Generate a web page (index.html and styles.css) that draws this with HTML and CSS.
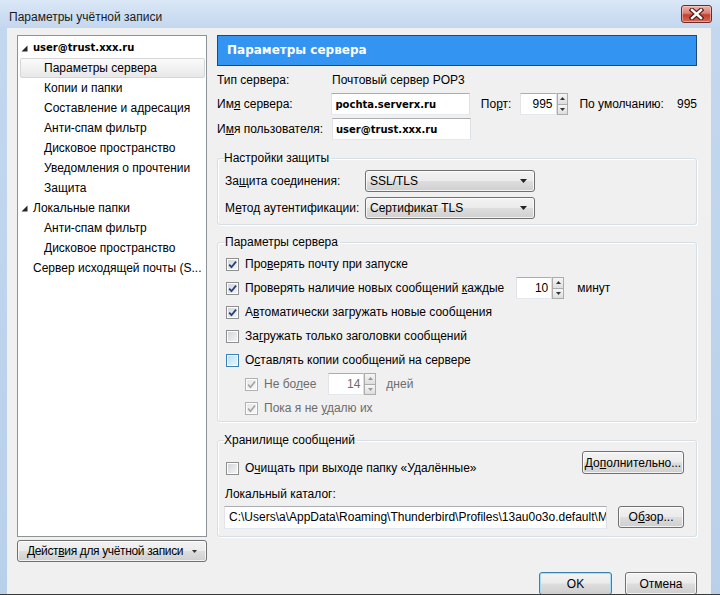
FILE: index.html
```html
<!DOCTYPE html>
<html lang="ru">
  <head>
    <meta charset="UTF-8" />
    <meta name="viewport" content="width=device-width, initial-scale=1.0" />
    <title>Параметры учётной записи</title>
    <link rel="stylesheet" href="styles.css">
  </head>
  <body>
    <div class="window">
      <div class="titlebar">
        <span class="title">Параметры учётной записи</span>
        <span class="close">
          <svg width="15" height="12" viewBox="0 0 15 12">
            <path d="M3 2 L12 10 M12 2 L3 10" stroke="#4a1612" stroke-width="4.6" stroke-linecap="square" fill="none" />
            <path d="M3 2 L12 10 M12 2 L3 10" stroke="#fff" stroke-width="2.4" stroke-linecap="square" fill="none" />
          </svg>
        </span>
      </div>

      <div class="client">
        <div class="body-row">
          <div class="sidebar">
            <ul class="tree">
              <li class="node">
                <span class="twisty"><svg width="7" height="7" viewBox="0 0 7 7"><polygon points="6.5,0.5 6.5,6.5 0.5,6.5" fill="#262626" /></svg></span>
                <span class="account">user@trust.xxx.ru</span>
              </li>
              <li class="child selected">Параметры сервера</li>
              <li class="child">Копии и папки</li>
              <li class="child">Составление и адресация</li>
              <li class="child">Анти-спам фильтр</li>
              <li class="child">Дисковое пространство</li>
              <li class="child">Уведомления о прочтении</li>
              <li class="child">Защита</li>
              <li class="node">
                <span class="twisty"><svg width="7" height="7" viewBox="0 0 7 7"><polygon points="6.5,0.5 6.5,6.5 0.5,6.5" fill="#262626" /></svg></span>
                <span>Локальные папки</span>
              </li>
              <li class="child">Анти-спам фильтр</li>
              <li class="child">Дисковое пространство</li>
              <li class="leaf">Сервер исходящей почты (S...</li>
            </ul>
            <button class="btn actions">
              <span class="actions-text">Дейст<u>в</u>ия для учётной записи</span>
              <svg width="5" height="3" viewBox="0 0 5 3"><polygon points="0,0 5,0 2.5,3" fill="#333" /></svg>
            </button>
          </div>

          <div class="main">
            <div class="banner">Параметры сервера</div>

            <div class="server-form">
              <div class="row">
                <span class="label">Тип сервера:</span>
                <span>Почтовый сервер POP3</span>
              </div>
              <div class="row">
                <span class="label">Им<u>я</u> сервера:</span>
                <span class="field host"><span class="strong">pochta.serverx.ru</span></span>
                <span class="port-label">По<u>р</u>т:</span>
                <span class="field num port">995</span>
                <span class="spin">
                  <span><svg width="5" height="3" viewBox="0 0 5 3"><polygon points="2.5,0 5,3 0,3" fill="#333" /></svg></span>
                  <span><svg width="5" height="3" viewBox="0 0 5 3"><polygon points="0,0 5,0 2.5,3" fill="#333" /></svg></span>
                </span>
                <span class="default-label">По умолчанию:</span>
                <span>995</span>
              </div>
              <div class="row">
                <span class="label">И<u>м</u>я пользователя:</span>
                <span class="field host"><span class="strong">user@trust.xxx.ru</span></span>
              </div>
            </div>

            <fieldset class="group security">
              <legend>Настройки защиты</legend>
              <div class="row">
                <span class="label">За<u>щ</u>ита соединения:</span>
                <span class="combo"><span>SSL/TLS</span><svg width="7" height="4" viewBox="0 0 7 4"><polygon points="0,0 7,0 3.5,4" fill="#222" /></svg></span>
              </div>
              <div class="row">
                <span class="label">М<u>е</u>тод аутентификации:</span>
                <span class="combo"><span>Сертификат TLS</span><svg width="7" height="4" viewBox="0 0 7 4"><polygon points="0,0 7,0 3.5,4" fill="#222" /></svg></span>
              </div>
            </fieldset>

            <fieldset class="group checks">
              <legend>Параметры сервера</legend>
              <div class="check-row">
                <span class="cb"><svg width="11" height="11" viewBox="0 0 11 11"><path d="M2.2 5.6 L4.5 8.2 L9 2.6" stroke="#28407a" stroke-width="1.8" fill="none" /></svg></span>
                <span>Про<u>в</u>ерять почту при запуске</span>
              </div>
              <div class="check-row">
                <span class="cb"><svg width="11" height="11" viewBox="0 0 11 11"><path d="M2.2 5.6 L4.5 8.2 L9 2.6" stroke="#28407a" stroke-width="1.8" fill="none" /></svg></span>
                <span>Проверять наличие новых сообщений <u>к</u>аждые</span>
                <span class="field num small gap-left">10</span>
                <span class="spin">
                  <span><svg width="5" height="3" viewBox="0 0 5 3"><polygon points="2.5,0 5,3 0,3" fill="#333" /></svg></span>
                  <span><svg width="5" height="3" viewBox="0 0 5 3"><polygon points="0,0 5,0 2.5,3" fill="#333" /></svg></span>
                </span>
                <span class="unit">минут</span>
              </div>
              <div class="check-row">
                <span class="cb"><svg width="11" height="11" viewBox="0 0 11 11"><path d="M2.2 5.6 L4.5 8.2 L9 2.6" stroke="#28407a" stroke-width="1.8" fill="none" /></svg></span>
                <span>А<u>в</u>томатически загружать новые сообщения</span>
              </div>
              <div class="check-row">
                <span class="cb"></span>
                <span>За<u>г</u>ружать только заголовки сообщений</span>
              </div>
              <div class="check-row">
                <span class="cb hover"></span>
                <span>О<u>с</u>тавлять копии сообщений на сервере</span>
              </div>
              <div class="check-row indent disabled">
                <span class="cb"><svg width="11" height="11" viewBox="0 0 11 11"><path d="M2.2 5.6 L4.5 8.2 L9 2.6" stroke="#a2a2a2" stroke-width="1.6" fill="none" /></svg></span>
                <span>Не бо<u>л</u>ее</span>
                <span class="field num small gap-left">14</span>
                <span class="spin">
                  <span><svg width="5" height="3" viewBox="0 0 5 3"><polygon points="2.5,0 5,3 0,3" fill="#999" /></svg></span>
                  <span><svg width="5" height="3" viewBox="0 0 5 3"><polygon points="0,0 5,0 2.5,3" fill="#999" /></svg></span>
                </span>
                <span class="unit days">дней</span>
              </div>
              <div class="check-row indent disabled">
                <span class="cb"><svg width="11" height="11" viewBox="0 0 11 11"><path d="M2.2 5.6 L4.5 8.2 L9 2.6" stroke="#a2a2a2" stroke-width="1.6" fill="none" /></svg></span>
                <span>Пока я не <u>у</u>далю их</span>
              </div>
            </fieldset>

            <fieldset class="group storage">
              <legend>Хранилище сообщений</legend>
              <div class="store-top">
                <div class="check-row empty-trash">
                  <span class="cb"></span>
                  <span>О<u>ч</u>ищать при выходе папку «Удалённые»</span>
                </div>
                <button class="btn more">До<u>п</u>олнительно...</button>
              </div>
              <div class="dir-label">Локальный каталог:</div>
              <div class="dir-row">
                <span class="field path">C:\Users\a\AppData\Roaming\Thunderbird\Profiles\13au0o3o.default\M</span>
                <button class="btn browse">О<u>б</u>зор...</button>
              </div>
            </fieldset>
          </div>
        </div>

        <div class="footer">
          <button class="btn ok">OK</button>
          <button class="btn cancel">Отмена</button>
        </div>
      </div>
    </div>
  </body>
</html>
```

FILE: styles.css
```css
* {
  box-sizing: border-box;
}
body {
  margin: 0;
  font-family: "Liberation Sans", Arial, sans-serif;
  font-size: 12px;
  color: #000;
}
.window {
  width: 720px;
  height: 595px;
  overflow: hidden;
  display: flex;
  flex-direction: column;
  background: linear-gradient(#dae7f6, #c3d7ef 28px, #b9d0eb);
  border-bottom: 1px solid #3a3a3a;
}
.titlebar {
  height: 28px;
  flex: none;
  display: flex;
  justify-content: space-between;
  align-items: flex-start;
  padding: 0 8px 0 9px;
}
.title {
  margin-top: 10px;
  line-height: 14px;
  color: #1a1a1a;
}
.close {
  margin-top: 5px;
  width: 31px;
  height: 18px;
  border: 1px solid #6e2b26;
  border-radius: 3px;
  background: linear-gradient(#eeb2a9, #d98074 45%, #c4402f 55%, #d26a5c);
  box-shadow: inset 0 0 0 1px rgba(255, 220, 215, 0.5);
  display: flex;
  align-items: center;
  justify-content: center;
}
.client {
  flex: 1;
  margin: 0 9px 0 7px;
  padding: 7px 14px 0 10px;
  background: #f0f0f0;
  display: flex;
  flex-direction: column;
  overflow: hidden;
}
.body-row {
  display: flex;
  gap: 10px;
}
.sidebar {
  width: 190px;
  display: flex;
  flex-direction: column;
  gap: 3px;
}
.tree {
  height: 502px;
  margin: 0;
  padding: 2px 0 0;
  list-style: none;
  background: #fff;
  border: 1px solid #8e9299;
}
.tree li {
  height: 20px;
  line-height: 20px;
  white-space: nowrap;
}
.tree .node {
  display: flex;
  align-items: center;
  padding-left: 3px;
}
.twisty {
  width: 12px;
  display: flex;
  align-items: center;
}
.account {
  font-family: "DejaVu Sans", sans-serif;
  font-weight: bold;
  font-size: 10px;
}
.tree .child {
  padding-left: 26px;
}
.tree .leaf {
  padding-left: 15px;
}
.tree .selected {
  margin: 0 1px 0 2px;
  padding-left: 23px;
  line-height: 18px;
  border: 1px solid #d6d6d6;
  border-radius: 2px;
  background: linear-gradient(#fbfbfb, #e8e8e8);
}
.btn {
  height: 22px;
  padding: 0;
  font: inherit;
  color: #000;
  white-space: nowrap;
  border: 1px solid #707070;
  border-radius: 3px;
  background: linear-gradient(#f3f3f3, #ebebeb 48%, #dddddd 52%, #cfcfcf);
  box-shadow: inset 0 0 0 1px rgba(255, 255, 255, 0.75);
  display: flex;
  align-items: center;
  justify-content: center;
}
.actions {
  justify-content: space-between;
  padding: 0 9px 0 9px;
}
.actions-text {
  letter-spacing: -0.35px;
}
.main {
  width: 480px;
  display: flex;
  flex-direction: column;
}
.banner {
  height: 31px;
  padding-left: 9px;
  line-height: 29px;
  color: #fff;
  font-family: "DejaVu Sans", sans-serif;
  font-weight: bold;
  font-size: 12px;
  background: #3494f2;
  border: 1px solid #1f4a73;
}
.server-form {
  margin-top: 4px;
}
.row {
  display: flex;
  align-items: center;
}
.server-form .row {
  height: 22px;
  margin-top: 3px;
}
.server-form .row:first-child {
  height: 20px;
  margin-top: 0;
}
.server-form .label {
  width: 115px;
}
.field {
  height: 22px;
  padding: 0 3px;
  line-height: 20px;
  background: #fff;
  border: 1px solid;
  border-color: #abadb3 #dbdfe6 #e3e9ef #e2e3ea;
  white-space: nowrap;
  overflow: hidden;
}
.host {
  width: 139px;
}
.strong {
  font-family: "DejaVu Sans", sans-serif;
  font-weight: bold;
  font-size: 10px;
}
.port-label {
  margin-left: 11px;
  width: 39px;
}
.num {
  text-align: right;
}
.port {
  width: 37px;
}
.spin {
  width: 12px;
  height: 22px;
  display: flex;
  flex-direction: column;
}
.spin span {
  flex: 1;
  display: flex;
  align-items: center;
  justify-content: center;
  border: 1px solid #acacac;
  background: linear-gradient(#f6f6f6, #dedede);
}
.spin span + span {
  border-top: none;
}
.default-label {
  margin-left: 11px;
  width: 98px;
}
.group {
  margin: 10px 0 0;
  padding: 0 7px 5px 7px;
  min-inline-size: auto;
  border: 1px solid #d5dfe5;
  border-radius: 3px;
  box-shadow: inset 1px 1px 0 #fff, 1px 1px 0 #fff;
}
.group legend {
  margin-left: -1px;
  padding: 0 2px 0 0;
  line-height: 16px;
}
.security {
  padding-top: 4px;
}
.security .row {
  height: 22px;
}
.security .row + .row {
  margin-top: 5px;
}
.security .label {
  width: 140px;
}
.combo {
  width: 170px;
  height: 22px;
  padding: 0 7px 0 4px;
  border: 1px solid #707070;
  border-radius: 3px;
  background: linear-gradient(#f3f3f3, #ebebeb 48%, #dddddd 52%, #cfcfcf);
  box-shadow: inset 0 0 0 1px rgba(255, 255, 255, 0.75);
  display: flex;
  align-items: center;
  justify-content: space-between;
}
.checks {
  margin-top: 9px;
  padding: 2px 7px 1px 8px;
}
.check-row {
  height: 24px;
  display: flex;
  align-items: center;
  white-space: nowrap;
}
.cb {
  width: 13px;
  height: 13px;
  margin-right: 6px;
  flex: none;
  display: flex;
  align-items: center;
  justify-content: center;
  border: 1px solid #8e8f8f;
  background: linear-gradient(135deg, #cfd3d8, #f7f7f7);
  box-shadow: inset 0 0 0 1px #fff;
}
.cb.hover {
  border-color: #3c7fb1;
  background: linear-gradient(135deg, #b4def5, #eaf7fd);
}
.indent {
  padding-left: 19px;
}
.disabled {
  color: #6d6d6d;
}
.disabled .cb {
  border-color: #b1b1b1;
  background: linear-gradient(135deg, #e6e6e6, #f9f9f9);
}
.small {
  width: 36px;
}
.gap-left {
  margin-left: 12px;
}
.unit {
  margin-left: 13px;
}
.days {
  margin-left: 10px;
}
.storage {
  padding: 3px 12px 7px 7px;
}
.store-top {
  display: flex;
  justify-content: space-between;
  align-items: flex-start;
}
.empty-trash {
  height: 16px;
  margin-top: 9px;
  margin-left: 1px;
}
.more {
  width: 102px;
  height: 23px;
}
.dir-label {
  margin-top: 10px;
  line-height: 16px;
}
.dir-row {
  margin-top: 4px;
  display: flex;
  align-items: flex-start;
  justify-content: space-between;
}
.path {
  width: 383px;
  height: 23px;
  margin-left: -1px;
  padding-left: 4px;
}
.browse {
  width: 66px;
}
.footer {
  margin-top: 10px;
  display: flex;
  justify-content: flex-end;
  gap: 13px;
}
.footer .btn {
  height: 23px;
}
.ok {
  width: 73px;
  border-color: #3c7fb1;
  box-shadow: inset 0 0 0 1px #a8dbf7;
}
.cancel {
  width: 72px;
}
```
